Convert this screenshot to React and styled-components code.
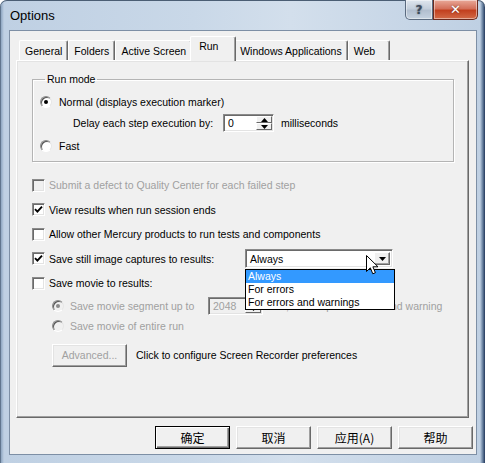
import React from "react";
import styled, { createGlobalStyle } from "styled-components";

const GlobalStyle = createGlobalStyle`
  html, body {
    margin: 0;
    padding: 0;
    background: #ffffff;
  }
  body {
    font-family: "Liberation Sans", Arial, sans-serif;
    font-size: 10.5px;
    color: #000;
  }
`;

const tabs = ["General", "Folders", "Active Screen", "Run", "Windows Applications", "Web"];
const captureOptions = ["Always", "For errors", "For errors and warnings"];

const Window = styled.div`
  width: 485px;
  height: 463px;
  box-sizing: border-box;
  display: flex;
  flex-direction: column;
  padding: 0 8px 8px 9px;
  border-radius: 7px 7px 0 0;
  background: linear-gradient(
    90deg,
    #34465c 0,
    #8ea6c1 1px,
    #bfd0e3 4px,
    #c9d8e8 40%,
    #d3dfec 60%,
    #bfd0e3 calc(100% - 5px),
    #5f7898 calc(100% - 2px),
    #23375a 100%
  );
  box-shadow: inset 0 1px 0 #4b5e74;
`;

const TitleBar = styled.div`
  height: 30px;
  display: flex;
  justify-content: space-between;
  align-items: flex-start;
`;

const Title = styled.div`
  padding: 8px 0 0 1px;
  font-size: 13px;
  color: #000;
`;

const TitleButtons = styled.div`
  display: flex;
  margin-right: -1px;
`;

const CaptionButton = styled.div`
  width: ${(p) => p.$w}px;
  height: 20px;
  box-sizing: border-box;
  display: flex;
  align-items: center;
  justify-content: center;
  border: 1px solid ${(p) => (p.$close ? "#6b2a1e" : "#5b6b80")};
  border-top: none;
  border-radius: ${(p) => (p.$close ? "0 0 5px 0" : "0 0 0 5px")};
  background: ${(p) =>
    p.$close
      ? "linear-gradient(#e9a999 0, #d4705a 45%, #c2401f 55%, #d26a47 100%)"
      : "linear-gradient(#dfe6ee 0, #c4cfdc 45%, #b2bfcf 55%, #c5d2e0 100%)"};
  box-shadow: inset 0 0 0 1px rgba(255, 255, 255, 0.45);
  color: ${(p) => (p.$close ? "#fff" : "#3c4a5c")};
  font-family: "DejaVu Sans", sans-serif;
  font-weight: bold;
  font-size: ${(p) => (p.$close ? 13 : 12)}px;
  text-shadow: 0 0 2px rgba(0, 0, 0, 0.5);
`;

const Client = styled.div`
  flex: 1;
  display: flex;
  flex-direction: column;
  background: #f0f0f0;
  border: 1px solid #7d8fa5;
  padding: 5px 2px 0 6px;
`;

const TabStrip = styled.div`
  display: flex;
  align-items: flex-end;
  height: 24px;
  padding-left: 3px;
  position: relative;
  z-index: 1;
`;

const Tab = styled.div`
  box-sizing: border-box;
  min-width: ${(p) => (p.$active ? 46 : 42)}px;
  height: ${(p) => (p.$active ? 25 : 20)}px;
  padding: ${(p) => (p.$active ? "3px 6px 0 8px" : "4px 5px 0 5px")};
  margin: ${(p) => (p.$active ? "0 -2px -1px" : "0")};
  position: relative;
  z-index: ${(p) => (p.$active ? 2 : 1)};
  background: #f0f0f0;
  border-top: 1px solid #ffffff;
  border-left: 1px solid #ffffff;
  border-right: 1px solid #696969;
  border-radius: 2px 2px 0 0;
  box-shadow: inset -1px 0 0 #a0a0a0;
  white-space: nowrap;
  line-height: 13px;
`;

const Panel = styled.div`
  box-sizing: border-box;
  height: 358px;
  margin-right: 5px;
  display: flex;
  flex-direction: column;
  padding: 1px 0 0 15px;
  border: 1px solid;
  border-color: #ffffff #696969 #696969 #ffffff;
  box-shadow: inset -1px -1px 0 #a0a0a0, inset 1px 1px 0 #e3e3e3;
`;

const GroupBox = styled.fieldset`
  width: 422px;
  box-sizing: border-box;
  margin: 11px 0 0 0;
  padding: 0 0 5px 7px;
  border: 1px solid #b4b4b4;
  box-shadow: 1px 1px 0 #fff, inset 1px 1px 0 #fff;
  display: flex;
  flex-direction: column;
`;

const Legend = styled.legend`
  margin-left: 5px;
  padding: 0 2px;
  line-height: 13px;
`;

const Row = styled.div`
  display: flex;
  align-items: center;
  height: ${(p) => p.$h || 20}px;
  margin-top: ${(p) => p.$mt || 0}px;
  margin-left: ${(p) => p.$ml || 0}px;
  gap: ${(p) => (p.$gap === undefined ? 4 : p.$gap)}px;
  color: ${(p) => (p.$disabled ? "#a0a0a0" : "#000")};
  white-space: nowrap;
`;

const RadioMark = styled.span`
  width: 12px;
  height: 12px;
  box-sizing: border-box;
  border-radius: 50%;
  border: 1px solid;
  border-color: #8a8a8a #e6e6e6 #ffffff #8a8a8a;
  box-shadow: inset 1px 1px 0 #555;
  background: ${(p) => (p.$disabled ? "#f0f0f0" : "#fff")};
  display: flex;
  align-items: center;
  justify-content: center;
  flex-shrink: 0;
  &::after {
    content: "";
    width: 4px;
    height: 4px;
    border-radius: 50%;
    background: ${(p) => (p.$disabled ? "#8a8a8a" : "#000")};
    display: ${(p) => (p.$checked ? "block" : "none")};
  }
`;

const CheckMark = styled.span`
  width: 13px;
  height: 13px;
  box-sizing: border-box;
  border: 1px solid;
  border-color: #8a8a8a #ffffff #ffffff #8a8a8a;
  box-shadow: inset 1px 1px 0 #6a6a6a, inset -1px -1px 0 #e3e3e3;
  background: ${(p) => (p.$disabled ? "#f0f0f0" : "#fff")};
  display: flex;
  align-items: center;
  justify-content: center;
  flex-shrink: 0;
`;

const Label = styled.span`
  width: ${(p) => (p.$w ? `${p.$w}px` : "auto")};
  flex-shrink: 0;
`;

const Sunken = styled.div`
  box-sizing: border-box;
  width: ${(p) => p.$w}px;
  height: 18px;
  display: flex;
  background: ${(p) => (p.$disabled ? "#f0f0f0" : "#fff")};
  border: 1px solid;
  border-color: #8a8a8a #ffffff #ffffff #8a8a8a;
  box-shadow: inset 1px 1px 0 #6a6a6a, inset -1px -1px 0 #e3e3e3;
  color: ${(p) => (p.$disabled ? "#a0a0a0" : "#000")};
`;

const FieldText = styled.span`
  flex: 1;
  padding: 2px 0 0 4px;
  line-height: 13px;
`;

const SpinButtons = styled.div`
  width: 16px;
  display: flex;
  flex-direction: column;
  padding: 1px 1px 1px 0;
`;

const SpinHalf = styled.div`
  flex: 1;
  display: flex;
  align-items: center;
  justify-content: center;
  background: #f0f0f0;
  border: 1px solid;
  border-color: #ffffff #696969 #696969 #ffffff;
`;

const ComboWrap = styled.div`
  position: relative;
`;

const Combo = styled.div`
  box-sizing: border-box;
  width: 148px;
  height: 19px;
  display: flex;
  background: #fff;
  border: 1px solid;
  border-color: #8a8a8a #ffffff #ffffff #8a8a8a;
  box-shadow: inset 1px 1px 0 #6a6a6a, inset -1px -1px 0 #e3e3e3;
  padding: 2px;
`;

const ComboValue = styled.span`
  flex: 1;
  padding: 1px 0 0 2px;
  line-height: 13px;
`;

const DropButton = styled.div`
  width: 16px;
  box-sizing: border-box;
  display: flex;
  align-items: center;
  justify-content: center;
  background: #f0f0f0;
  border: 1px solid;
  border-color: #ffffff #696969 #696969 #ffffff;
  box-shadow: inset -1px -1px 0 #a0a0a0;
`;

const DropList = styled.ul`
  position: absolute;
  top: 20px;
  left: 0;
  width: 150px;
  box-sizing: border-box;
  margin: 0;
  padding: 0;
  list-style: none;
  background: #fff;
  border: 1px solid #000;
  z-index: 5;
`;

const DropItem = styled.li`
  height: 13px;
  line-height: 13px;
  padding-left: 2px;
  background: ${(p) => (p.$selected ? "#3399ff" : "transparent")};
  color: ${(p) => (p.$selected ? "#fff" : "#000")};
`;

const Cursor = styled.svg`
  position: absolute;
  left: 121px;
  top: 6px;
  z-index: 6;
`;

const PushButton = styled.button`
  box-sizing: border-box;
  width: ${(p) => p.$w || 75}px;
  height: 23px;
  margin: 0;
  padding: 0;
  font-family: ${(p) =>
    p.$cjk
      ? '"Noto Sans CJK SC", "Liberation Sans", sans-serif'
      : '"Liberation Sans", Arial, sans-serif'};
  font-size: ${(p) => (p.$cjk ? 12 : 10.5)}px;
  color: ${(p) => (p.disabled ? "#a0a0a0" : "#000")};
  background: #f0f0f0;
  border: 1px solid;
  border-color: ${(p) => (p.$default ? "#000" : "#ffffff #696969 #696969 #ffffff")};
  box-shadow: ${(p) =>
    p.$default
      ? "inset 1px 1px 0 #fff, inset -1px -1px 0 #696969, inset -2px -2px 0 #a0a0a0"
      : "inset -1px -1px 0 #a0a0a0, inset 1px 1px 0 #e3e3e3"};
`;

const ButtonBar = styled.div`
  display: flex;
  justify-content: flex-end;
  gap: 6px;
  margin-top: 8px;
  padding-right: 1px;
`;

const Check = () => (
  <svg width="9" height="9" viewBox="0 0 9 9">
    <path d="M1 4.2 L3.4 6.6 L8 1.6" fill="none" stroke="#000" strokeWidth="1.9" />
  </svg>
);

const Arrow = ({ up }) => (
  <svg width="7" height="4" viewBox="0 0 7 4">
    <path d={up ? "M3.5 0 L7 4 L0 4 Z" : "M0 0 L7 0 L3.5 4 Z"} fill="#000" />
  </svg>
);

const SpinBox = ({ value, width, disabled }) => (
  <Sunken $w={width} $disabled={disabled}>
    <FieldText>{value}</FieldText>
    <SpinButtons>
      <SpinHalf>
        <Arrow up />
      </SpinHalf>
      <SpinHalf>
        <Arrow />
      </SpinHalf>
    </SpinButtons>
  </Sunken>
);

const CheckRow = ({ checked, disabled, children }) => (
  <Row $h={24.5} $disabled={disabled}>
    <CheckMark $disabled={disabled}>{checked && <Check />}</CheckMark>
    {children}
  </Row>
);

export default function App() {
  return (
    <>
      <GlobalStyle />
      <Window>
        <TitleBar>
          <Title>Options</Title>
          <TitleButtons>
            <CaptionButton $w={28}>?</CaptionButton>
            <CaptionButton $w={45} $close>
              ✕
            </CaptionButton>
          </TitleButtons>
        </TitleBar>
        <Client>
          <TabStrip>
            {tabs.map((t) => (
              <Tab key={t} $active={t === "Run"}>
                {t}
              </Tab>
            ))}
          </TabStrip>
          <Panel>
            <GroupBox>
              <Legend>Run mode</Legend>
              <Row $mt={6} $gap={7}>
                <RadioMark $checked />
                <span>Normal (displays execution marker)</span>
              </Row>
              <Row $mt={1} $ml={33} $gap={4}>
                <Label $w={146}>Delay each step execution by:</Label>
                <SpinBox value="0" width={51} />
                <Label>&nbsp;milliseconds</Label>
              </Row>
              <Row $mt={3} $gap={7}>
                <RadioMark />
                <span>Fast</span>
              </Row>
            </GroupBox>

            <Row $h={11} />
            <CheckRow disabled>Submit a defect to Quality Center for each failed step</CheckRow>
            <CheckRow checked>View results when run session ends</CheckRow>
            <CheckRow>Allow other Mercury products to run tests and components</CheckRow>
            <CheckRow checked>
              <Label $w={192}>Save still image captures to results:</Label>
              <ComboWrap>
                <Combo>
                  <ComboValue>Always</ComboValue>
                  <DropButton>
                    <Arrow />
                  </DropButton>
                </Combo>
                <DropList>
                  {captureOptions.map((o) => (
                    <DropItem key={o} $selected={o === "Always"}>
                      {o}
                    </DropItem>
                  ))}
                </DropList>
                <Cursor width="13" height="21" viewBox="0 0 13 21">
                  <path
                    d="M0.5 0.5 L0.5 16.5 L4.3 12.8 L6.8 18.8 L9.4 17.7 L6.9 11.8 L12 11.8 Z"
                    fill="#fff"
                    stroke="#000"
                    strokeWidth="1"
                    strokeLinejoin="round"
                  />
                </Cursor>
              </ComboWrap>
            </CheckRow>
            <CheckRow>Save movie to results:</CheckRow>

            <Row $ml={20} $gap={6} $disabled>
              <RadioMark $checked $disabled />
              <Label $w={132}>Save movie segment up to</Label>
              <SpinBox value="2048" width={55} disabled />
              <span>&nbsp;KB, and stops on errors and warning</span>
            </Row>
            <Row $ml={20} $gap={6} $disabled>
              <RadioMark $disabled />
              <span>Save movie of entire run</span>
            </Row>
            <Row $h={23} $mt={8} $ml={20} $gap={9}>
              <PushButton disabled>Advanced...</PushButton>
              <span>Click to configure Screen Recorder preferences</span>
            </Row>
          </Panel>
          <ButtonBar>
            <PushButton $cjk $default>
              确定
            </PushButton>
            <PushButton $cjk>取消</PushButton>
            <PushButton $cjk>应用(A)</PushButton>
            <PushButton $cjk>帮助</PushButton>
          </ButtonBar>
        </Client>
      </Window>
    </>
  );
}
